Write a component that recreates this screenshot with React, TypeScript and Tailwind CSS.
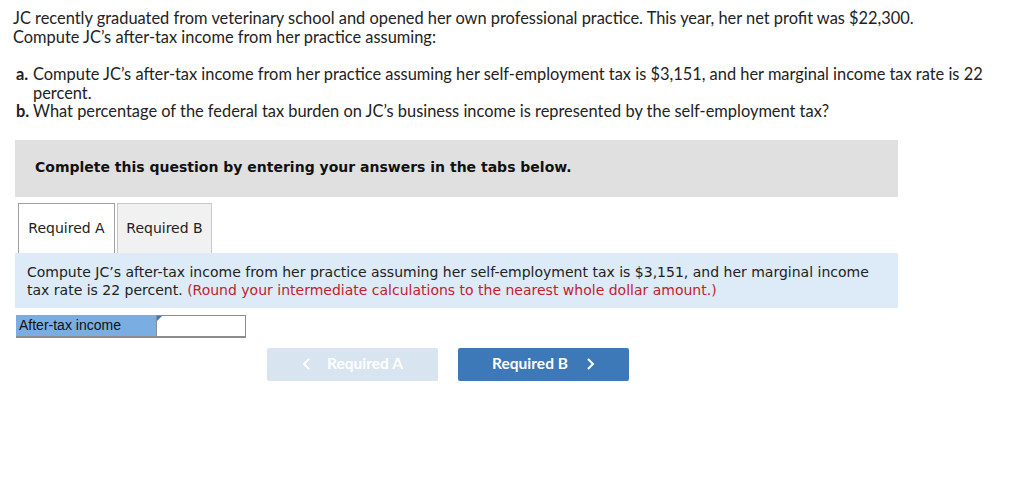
import React from "react";

export default function App() {
  const proxima = { fontFamily: '"Lato", "Open Sans", sans-serif' };
  const verdana = { fontFamily: '"DejaVu Sans", Verdana, sans-serif' };
  return (
    <div className="w-[1024px] h-[497px] bg-white text-black overflow-hidden">
      <div className="pl-[13px] pr-[20px] pt-[9px] text-[16.4px] leading-[18.5px] text-[#222]" style={proxima}>
        <p>JC recently graduated from veterinary school and opened her own professional practice. This year, her net profit was $22,300.</p>
        <p>Compute JC’s after-tax income from her practice assuming:</p>
        <div className="mt-[19px] pl-[3px]">
          <div className="flex">
            <span className="font-bold w-[17px] shrink-0">a.</span>
            <span>Compute JC’s after-tax income from her practice assuming her self-employment tax is $3,151, and her marginal income tax rate is 22 percent.</span>
          </div>
          <div className="flex">
            <span className="font-bold w-[17px] shrink-0">b.</span>
            <span>What percentage of the federal tax burden on JC’s business income is represented by the self-employment tax?</span>
          </div>
        </div>
      </div>
      <div className="ml-[15px] w-[883px] mt-[19px] h-[57px] bg-[#e0e0e0] flex items-center pl-[20px] pb-[2px]">
        <span className="font-bold text-[14px] text-[#111]" style={verdana}>
          Complete this question by entering your answers in the tabs below.
        </span>
      </div>
      <div className="ml-[18px] mt-[6px] flex gap-[2px] h-[50px]" style={verdana}>
        <div className="w-[97px] border border-b-0 border-[#a0a0a0] bg-white flex items-center justify-center text-[14px] text-[#222]">Required A</div>
        <div className="w-[95px] border border-b-0 border-[#c8c8c8] bg-[#f1f1f1] flex items-center justify-center text-[14px] text-[#222]">Required B</div>
      </div>
      <div className="ml-[15px] w-[883px] h-[55px] bg-[#dcebf7] pl-[12px] pr-[10px] pt-[10px] text-[14px] leading-[18px] text-[#222]" style={verdana}>
        Compute JC’s after-tax income from her practice assuming her self-employment tax is $3,151, and her marginal income tax rate is 22 percent. <span className="text-[#c5202d]">(Round your intermediate calculations to the nearest whole dollar amount.)</span>
      </div>
      <div className="ml-[16px] mt-[7px] flex h-[23px]" style={{ fontFamily: '"Liberation Sans", Arial, sans-serif' }}>
        <div className="w-[140px] bg-[#7aaee3] border-b-2 border-[#8c8c8c] text-[14px] text-[#111] pl-[3px] leading-[21px]">After-tax income</div>
        <div className="relative w-[90px] bg-white border border-[#8c8c8c] border-b-2">
          <div className="absolute left-0 top-0 w-0 h-0 border-t-[5px] border-t-[#3d78b8] border-r-[5px] border-r-transparent" />
        </div>
      </div>
      <div className="mt-[10px] flex gap-[20px] ml-[267px]" style={proxima}>
        <div className="w-[171px] h-[33px] rounded-[2px] bg-[#d9e4f1] flex items-center justify-center gap-[16px] text-white font-bold text-[15.5px]">
          <svg width="9" height="14" viewBox="0 0 9 14"><path d="M7 2 L2 7 L7 12" fill="none" stroke="white" strokeWidth="2" /></svg>
          <span>Required A</span>
        </div>
        <div className="w-[171px] h-[33px] rounded-[2px] bg-[#3d78b8] flex items-center justify-center gap-[18px] text-white font-bold text-[15.5px]">
          <span>Required B</span>
          <svg width="9" height="14" viewBox="0 0 9 14"><path d="M2 2 L7 7 L2 12" fill="none" stroke="white" strokeWidth="2" /></svg>
        </div>
      </div>
    </div>
  );
}
